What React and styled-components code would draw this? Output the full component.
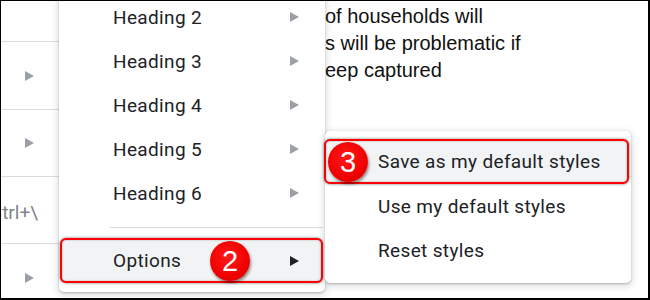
import React from 'react'
import styled, { createGlobalStyle } from 'styled-components'

const GlobalStyle = createGlobalStyle`
    html, body {
        margin: 0;
        padding: 0;
        background: #fff;
    }
    * {
        box-sizing: border-box;
    }
`;

const Page = styled.div`
    position: relative;
    width: 650px;
    height: 300px;
    overflow: hidden;
    background: #fff;
    border: 1px solid #000;
    border-right-width: 2px;
    border-bottom-width: 2px;
    display: flex;
    font-family: Roboto, "Noto Sans", sans-serif;
`;

const ParentColumn = styled.div`
    width: 58px;
    flex: none;
    display: flex;
    flex-direction: column;
    overflow: hidden;
`;

const ParentRow = styled.div`
    height: ${props => props.height}px;
    flex: none;
    display: flex;
    align-items: center;
    justify-content: flex-end;
    padding-right: ${props => props.padRight ? props.padRight : 25}px;
    padding-top: ${props => props.padTop ? props.padTop : 0}px;
    border-bottom: ${props => props.last ? "none" : "1px solid #dadce0"};
    white-space: nowrap;
`;

const Shortcut = styled.span`
    font-size: 19px;
    color: #80868b;
    flex: none;
`;

const Arrow = styled.span`
    width: 0;
    height: 0;
    flex: none;
    border-left: 9px solid ${props => props.dark ? "#202124" : "#9aa0a6"};
    border-top: 5px solid transparent;
    border-bottom: 5px solid transparent;
`;

const DocArea = styled.div`
    flex: 1;
    padding: 2px 0 0 266px;
    font-family: "Liberation Sans", Arial, sans-serif;
    font-size: 20px;
    line-height: 27px;
    color: #111;
    white-space: nowrap;
`;

const Menu = styled.div`
    position: absolute;
    left: ${props => props.left}px;
    top: ${props => props.top}px;
    width: ${props => props.width}px;
    background: #fff;
    border-radius: 5px;
    padding: ${props => props.padding};
    box-shadow: 0 2px 6px 2px rgba(60, 64, 67, 0.15), 0 1px 2px rgba(60, 64, 67, 0.3);
    display: flex;
    flex-direction: column;
`;

const Item = styled.div`
    position: relative;
    height: ${props => props.active ? 45 : 44}px;
    display: flex;
    align-items: center;
    justify-content: space-between;
    padding: 0 ${props => props.padRight}px 0 ${props => props.padLeft}px;
    margin: ${props => props.margin ? props.margin : "0"};
    font-size: 19px;
    color: #202124;
    letter-spacing: 0.35px;
    white-space: nowrap;
    background: ${props => props.active ? "#f1f3f4" : "transparent"};
    border: ${props => props.active ? "2px solid #ff0000" : "none"};
    border-radius: ${props => props.active ? "6px" : "0"};
    box-shadow: ${props => props.active ?
        "0 0 3px rgba(0, 0, 0, 0.55), inset 0 0 2px rgba(0, 0, 0, 0.3)" : "none"};
`;

const Separator = styled.div`
    height: 1px;
    background: #dadce0;
    margin: 12px 2px 10px 51px;
`;

const Badge = styled.span`
    position: absolute;
    left: ${props => props.left}px;
    top: ${props => props.top}px;
    width: 40px;
    height: 40px;
    border-radius: 50%;
    background: radial-gradient(circle at 45% 40%, #ff1a1a 0%, #f00000 60%, #c80000 100%);
    box-shadow: 1px 2px 3px rgba(0, 0, 0, 0.45);
    color: #fff;
    font-family: "Liberation Sans", Arial, sans-serif;
    font-size: 29px;
    letter-spacing: 0;
    line-height: 40px;
    text-align: center;
`;

const parentRows = [
    { height: 41 },
    { height: 68, arrow: true },
    { height: 67, arrow: true },
    { height: 67, shortcut: "Ctrl+\\", padRight: 21, padTop: 4 },
    { height: 67, arrow: true, last: true },
]

const headings = ["Heading 2", "Heading 3", "Heading 4", "Heading 5", "Heading 6"]

const docLines = ["of households will", "s will be problematic if", "eep captured"]

export default function App() {
    return (
        <>
            <GlobalStyle />
            <Page>
                <ParentColumn>
                    {parentRows.map((row, i) => (
                        <ParentRow
                            key={i}
                            height={row.height}
                            padRight={row.padRight}
                            padTop={row.padTop}
                            last={row.last}
                        >
                            {row.arrow && <Arrow />}
                            {row.shortcut && <Shortcut>{row.shortcut}</Shortcut>}
                        </ParentRow>
                    ))}
                </ParentColumn>
                <DocArea>
                    {docLines.map((line, i) => (
                        <div key={i}>{line}</div>
                    ))}
                </DocArea>

                <Menu left={58} top={-6} width={266} padding="0 0 9px 0">
                    {headings.map((h, i) => (
                        <Item key={i} padLeft={54} padRight={26}>
                            <span>{h}</span>
                            <Arrow />
                        </Item>
                    ))}
                    <Separator />
                    <Item active padLeft={51} padRight={22} margin="0 2px 0 1px">
                        <span>Options</span>
                        <Badge left={148} top={1}>2</Badge>
                        <Arrow dark />
                    </Item>
                </Menu>

                <Menu left={324} top={130} width={306} padding="8px 0 11px 0">
                    <Item active padLeft={52} padRight={10} margin="0 2px 0 -1px">
                        <Badge left={2} top={1}>3</Badge>
                        <span>Save as my default styles</span>
                    </Item>
                    <Item padLeft={53} padRight={10}>
                        <span>Use my default styles</span>
                    </Item>
                    <Item padLeft={53} padRight={10}>
                        <span>Reset styles</span>
                    </Item>
                </Menu>
            </Page>
        </>
    )
}
